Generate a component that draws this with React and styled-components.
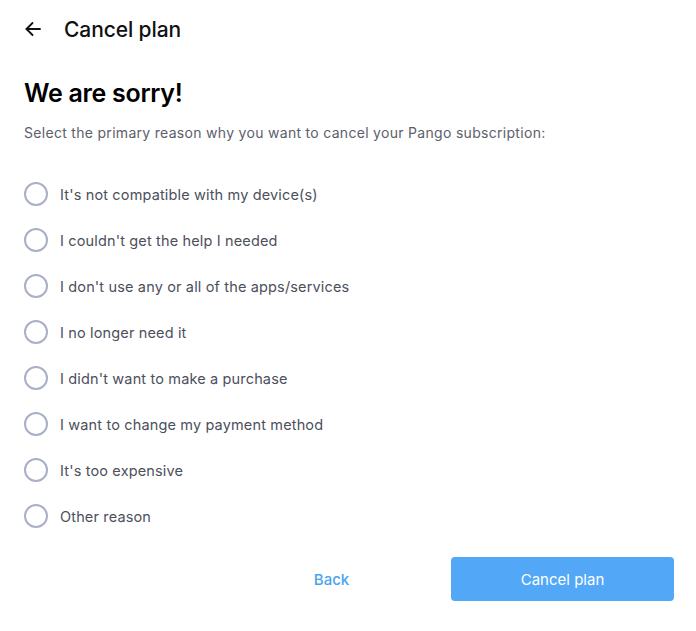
import React from 'react';
import styled, { createGlobalStyle } from 'styled-components';

const GlobalStyle = createGlobalStyle`
  body {
    margin: 0;
    background: #fff;
    font-family: Inter, "Noto Sans", sans-serif;
  }
`;

const Page = styled.div`
  width: 696px;
  height: 631px;
  box-sizing: border-box;
  padding: 0 22px 0 24px;
  display: flex;
  flex-direction: column;
`;

const Header = styled.div`
  height: 58px;
  display: flex;
  align-items: center;
  gap: 22px;
`;

const BackArrow = styled.button`
  border: none;
  background: none;
  padding: 0;
  margin: 0;
  width: 18px;
  height: 18px;
  display: flex;
  align-items: center;
  cursor: pointer;
`;

const Title = styled.h1`
  margin: 0;
  font-size: 21px;
  font-weight: 500;
  color: #111;
  letter-spacing: -0.1px;
`;

const Heading = styled.h2`
  margin: 19px 0 0;
  font-size: 25px;
  font-weight: 600;
  color: #000;
  line-height: 32px;
  letter-spacing: -0.3px;
`;

const Subtitle = styled.p`
  margin: 14px 0 0;
  font-size: 14px;
  letter-spacing: 0.3px;
  color: #5c606c;
  line-height: 20px;
`;

const List = styled.div`
  margin-top: 39px;
  display: flex;
  flex-direction: column;
  gap: 22px;
`;

const Option = styled.label`
  display: flex;
  align-items: center;
  gap: 12px;
  height: 24px;
  cursor: pointer;
  font-size: 14.5px;
  letter-spacing: 0.15px;
  color: #4c505c;
`;

const Circle = styled.span`
  width: 24px;
  height: 24px;
  box-sizing: border-box;
  border-radius: 50%;
  border: 2px solid ${p => (p.$checked ? '#52a8f7' : '#a8afc7')};
  display: flex;
  align-items: center;
  justify-content: center;
  flex-shrink: 0;

  &::after {
    content: '';
    width: 12px;
    height: 12px;
    border-radius: 50%;
    background: #52a8f7;
    display: ${p => (p.$checked ? 'block' : 'none')};
  }
`;

const Actions = styled.div`
  margin-top: 29px;
  display: flex;
  justify-content: flex-end;
  gap: 8px;
`;

const Button = styled.button`
  width: 223px;
  height: 44px;
  border-radius: 4px;
  border: none;
  font-family: inherit;
  font-size: 15px;
  cursor: pointer;
  background: ${p => (p.$primary ? '#52a8f7' : 'transparent')};
  color: ${p => (p.$primary ? '#fff' : '#4aa3f0')};
  font-weight: ${p => (p.$primary ? 400 : 500)};
`;

const reasons = [
  "It's not compatible with my device(s)",
  "I couldn't get the help I needed",
  "I don't use any or all of the apps/services",
  'I no longer need it',
  "I didn't want to make a purchase",
  'I want to change my payment method',
  "It's too expensive",
  'Other reason',
];

export default function App() {
  const [selected, setSelected] = React.useState(null);

  return (
    <Page>
      <GlobalStyle />
      <Header>
        <BackArrow aria-label="Back">
          <svg width="18" height="18" viewBox="0 0 18 18" fill="none" stroke="#111" strokeWidth="1.8" strokeLinecap="round" strokeLinejoin="round">
            <path d="M16 9H2.5" />
            <path d="M8.5 3L2.5 9l6 6" />
          </svg>
        </BackArrow>
        <Title>Cancel plan</Title>
      </Header>
      <Heading>We are sorry!</Heading>
      <Subtitle>Select the primary reason why you want to cancel your Pango subscription:</Subtitle>
      <List>
        {reasons.map((r, i) => (
          <Option key={r} onClick={() => setSelected(i)}>
            <Circle $checked={selected === i} />
            {r}
          </Option>
        ))}
      </List>
      <Actions>
        <Button>Back</Button>
        <Button $primary>Cancel plan</Button>
      </Actions>
    </Page>
  );
}
